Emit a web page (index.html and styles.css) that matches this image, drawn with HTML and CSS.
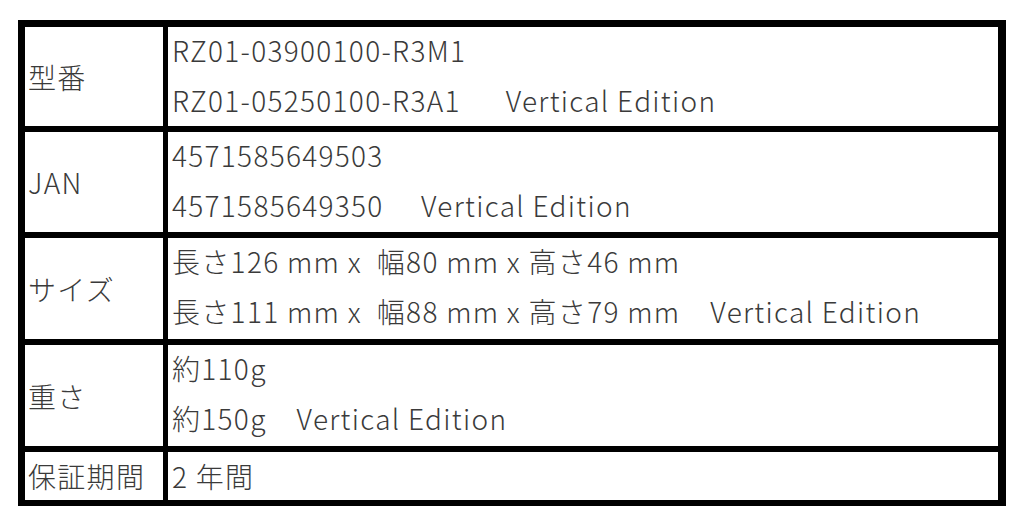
FILE: index.html
```html
<!DOCTYPE html>
<html lang="ja">
<head>
<meta charset="utf-8">
<title>仕様</title>
<link rel="stylesheet" href="styles.css">
</head>
<body>
<div class="spec">
  <div class="label">型番</div>
  <div class="value">
    <div class="line">RZ01-03900100-R3M1</div>
    <div class="line">RZ01-05250100-R3A1      Vertical Edition</div>
  </div>
  <div class="label">JAN</div>
  <div class="value">
    <div class="line">4571585649503</div>
    <div class="line">4571585649350     Vertical Edition</div>
  </div>
  <div class="label">サイズ</div>
  <div class="value">
    <div class="line">長さ126 mm x  幅80 mm x 高さ46 mm</div>
    <div class="line">長さ111 mm x  幅88 mm x 高さ79 mm    Vertical Edition</div>
  </div>
  <div class="label">重さ</div>
  <div class="value">
    <div class="line">約110g</div>
    <div class="line">約150g    Vertical Edition</div>
  </div>
  <div class="label">保証期間</div>
  <div class="value single">
    <div class="line">2 年間</div>
  </div>
</div>
</body>
</html>
```
FILE: styles.css
```css
html, body {
  margin: 0;
  padding: 0;
  background: #fff;
}
body {
  padding: 20px 18px 0 18px;
  font-family: "Noto Sans CJK JP Light", "Noto Sans CJK JP DemiLight", "Noto Sans CJK JP", "Noto Sans", sans-serif;
  font-weight: 300;
  color: #3a3a3a;
  letter-spacing: 1.3px;
}
.spec {
  width: 988px;
  box-sizing: border-box;
  background: #000;
  padding: 7px 8px 6px 7px;
  display: grid;
  grid-template-columns: 138px 1fr;
  grid-template-rows: 99px 100px 101px 101px 48px;
  column-gap: 5px;
  row-gap: 6px;
}
.label {
  background: #fff;
  display: flex;
  align-items: center;
  padding-left: 3px;
  font-size: 28px;
  line-height: 40px;
}
.value {
  background: #fff;
  padding-left: 4px;
  font-size: 28px;
}
.line {
  white-space: pre;
  line-height: 50px;
  margin-top: -2px;
  margin-bottom: 2px;
}
.single .line {
  line-height: 48px;
  margin: 0;
}
```
